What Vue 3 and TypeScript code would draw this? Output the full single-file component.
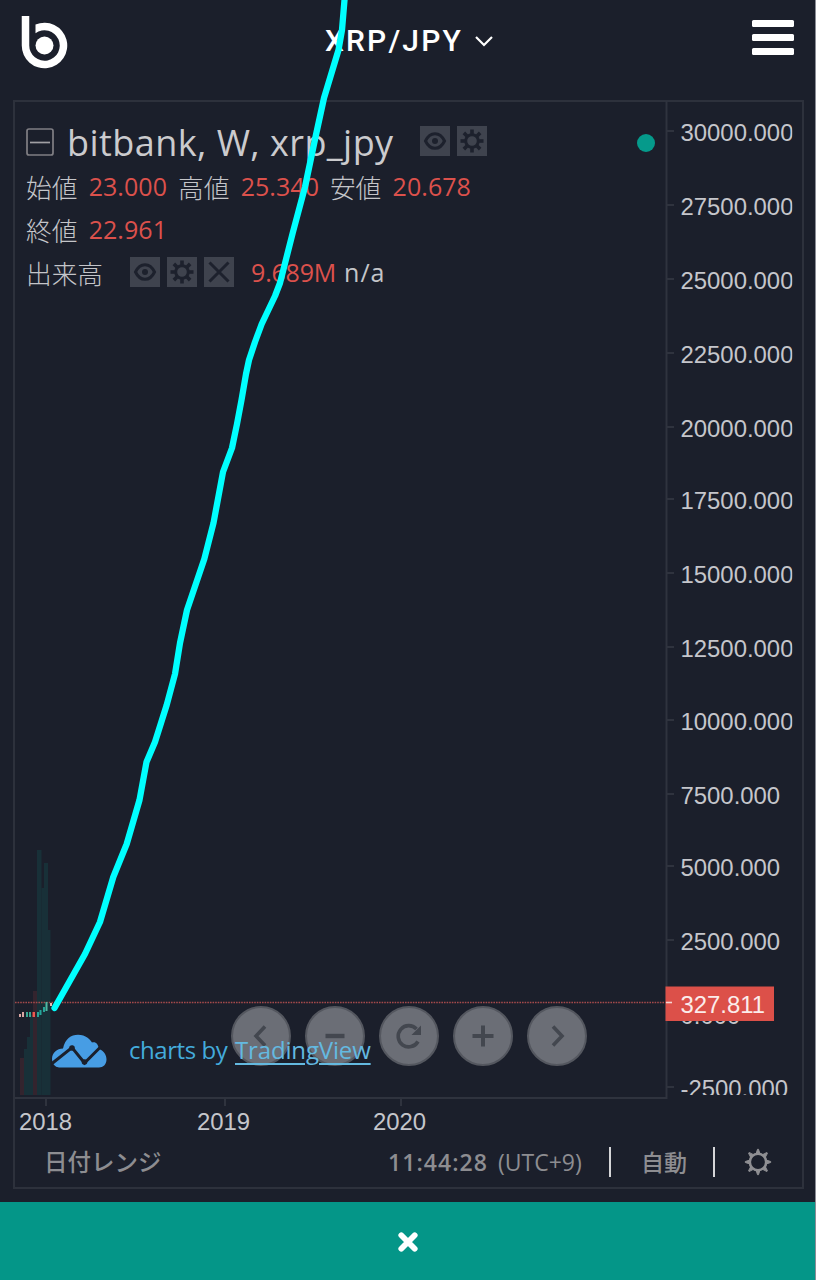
<script setup lang="ts">
interface Tick {
  y: number
  label: string
}

const priceTicks: Tick[] = [
  { y: 131, label: '30000.000' },
  { y: 205, label: '27500.000' },
  { y: 279, label: '25000.000' },
  { y: 353, label: '22500.000' },
  { y: 427, label: '20000.000' },
  { y: 499, label: '17500.000' },
  { y: 573, label: '15000.000' },
  { y: 647, label: '12500.000' },
  { y: 720, label: '10000.000' },
  { y: 794, label: '7500.000' },
  { y: 866, label: '5000.000' },
  { y: 940, label: '2500.000' },
  { y: 1014, label: '0.000' },
  { y: 1087, label: '-2500.000' },
]

const years = [
  { x: 46, left: 19, label: '2018' },
  { x: 225, left: 197, label: '2019' },
  { x: 401, left: 373, label: '2020' },
]

const volumes = [
  { x: 20, w: 4, y: 1058, up: false },
  { x: 24, w: 3, y: 1049, up: true },
  { x: 27, w: 3, y: 1037, up: true },
  { x: 30, w: 3, y: 1015, up: true },
  { x: 33, w: 4, y: 991, up: false },
  { x: 37, w: 4.5, y: 850, up: true },
  { x: 41.5, w: 2.5, y: 888, up: true },
  { x: 44, w: 4, y: 863, up: true },
  { x: 48, w: 2.5, y: 930, up: true },
]

const candles = [
  { x: 19, y: 1014, w: 2, h: 3, c: '#d9a5a2' },
  { x: 22, y: 1012, w: 2, h: 5, c: '#d9a5a2' },
  { x: 26, y: 1012, w: 2, h: 5, c: '#3aa692' },
  { x: 29, y: 1012, w: 2, h: 5, c: '#3aa692' },
  { x: 32.5, y: 1012, w: 2.5, h: 5, c: '#f0574f' },
  { x: 37, y: 1012, w: 2, h: 5, c: '#26a69a' },
  { x: 39.5, y: 1010, w: 2, h: 5, c: '#26a69a' },
  { x: 43, y: 1007, w: 2, h: 5, c: '#26a69a' },
  { x: 45.5, y: 1002, w: 2, h: 9, c: '#4fb8a2' },
  { x: 50, y: 1003, w: 2, h: 3, c: '#e6b9b0' },
]

const trend: [number, number][] = [
  [345, -4], [344.5, 0], [342, 30], [338.5, 50], [324, 98], [315.5, 137], [305, 187],
  [292.7, 233], [280, 283], [275, 296], [261.7, 324], [255, 342], [249, 360], [246, 374], [241.5, 400],
  [237, 424], [232, 448], [223, 472], [213.5, 523], [204.3, 559], [187, 610], [180, 643],
  [175, 674], [166.7, 705], [155, 742], [146.5, 762], [139.5, 800], [126.7, 844],
  [113.3, 877], [100, 922], [85, 954], [54.5, 1008],
]
const trendPoints = trend.map((p) => p.join(',')).join(' ')

const navButtons = ['left', 'minus', 'reset', 'plus', 'right']
const teeth = [0, 45, 90, 135, 180, 225, 270, 315]
</script>

<template>
  <div class="screen">
    <header class="topbar">
      <svg class="logo" width="48" height="54" viewBox="0 0 48 54">
        <path d="M.75 1H8.250V30.500A15.250 15.250 0 1 0 14.500 18.200V9.600A22.750 22.750 0 1 1 .75 30.500Z" fill="#fff" />
        <circle cx="23.500" cy="30.500" r="9" fill="#fff" />
      </svg>
      <div class="pair">
        <span class="pair-name">XRP/JPY</span>
        <svg width="18" height="12" viewBox="0 0 18 12"><path d="M1 2l8 8 8-8" fill="none" stroke="#fff" stroke-width="2.200" /></svg>
      </div>
      <div class="menu"><i></i><i></i><i></i></div>
    </header>

    <main class="frame">
      <svg class="chart" width="788" height="1040" viewBox="15 101 788 1040">
        <defs>
          <clipPath id="axisClip"><rect x="667" y="101" width="125.300" height="994" /></clipPath>
        </defs>
        <g v-for="v in volumes" :key="v.x">
          <rect :x="v.x" :y="v.y" :width="v.w" :height="1095 - v.y" :fill="v.up ? '#183038' : '#33242e'" />
        </g>
        <line x1="15" x2="666" y1="1002.5" y2="1002.5" stroke="#a44a4b" stroke-width="1.6" stroke-dasharray="1.6 1" />
        <rect v-for="c in candles" :key="c.x" :x="c.x" :y="c.y" :width="c.w" :height="c.h" :fill="c.c" />

        <g stroke="#2f333e" stroke-width="2">
          <path d="M666.5 101V1099M15 1098H667.5" fill="none" />
          <line v-for="t in priceTicks" :key="t.y" x1="667" x2="674" :y1="t.y" :y2="t.y" />
          <line v-for="y in years" :key="y.x" :x1="y.x" :x2="y.x" y1="1099" y2="1106" />
        </g>
        <g class="axis" clip-path="url(#axisClip)">
          <text v-for="t in priceTicks" :key="t.y" x="680.5" :y="t.y + 9.5">{{ t.label }}</text>
        </g>
        <g class="axis">
          <text v-for="y in years" :key="y.x" :x="y.left" y="1130">{{ y.label }}</text>
        </g>
        <rect x="665.5" y="986.5" width="108.5" height="34.5" fill="#dc5049" />
        <line x1="666" x2="672" y1="1002.5" y2="1002.5" stroke="#f6d5d2" stroke-width="1.6" />
        <text class="last" x="680.5" y="1012.5">327.811</text>
        <circle cx="646" cy="143" r="9" fill="#059a8b" />
      </svg>

      <section class="legend">
        <div class="row title-row">
          <svg class="collapse" width="28" height="28" viewBox="0 0 28 28">
            <rect x="1" y="1" width="26" height="26" rx="2" fill="none" stroke="#807f84" stroke-width="1.7" />
            <path d="M4 14.500H24" stroke="#a09fa3" stroke-width="1.7" />
          </svg>
          <h1>bitbank, W, xrp_jpy</h1>
          <div class="tools">
            <span class="tool">
              <svg width="30" height="30" viewBox="0 0 30 30"><path d="M5.500 15C10 5.300 20 5.300 24.500 15C20 24.700 10 24.700 5.500 15Z" fill="none" stroke="#1d212d" stroke-width="3" /><circle cx="15" cy="15" r="3" fill="#1d212d" /></svg>
            </span>
            <span class="tool">
              <svg width="30" height="30" viewBox="0 0 30 30"><circle cx="15" cy="15" r="6.300" fill="none" stroke="#1d212d" stroke-width="3" /><path v-for="a in teeth" :key="a" d="M15 3.500V8.500" stroke="#1d212d" stroke-width="3.600" :transform="`rotate(${a} 15 15)`" /></svg>
            </span>
          </div>
        </div>
        <div class="row values">
          <span class="jp">始値</span><b>23.000</b>
          <span class="jp">高値</span><b>25.340</b>
          <span class="jp">安値</span><b>20.678</b>
        </div>
        <div class="row values"><span class="jp">終値</span><b>22.961</b></div>
        <div class="row values volume">
          <span class="jp">出来高</span>
          <div class="tools">
            <span class="tool">
              <svg width="30" height="30" viewBox="0 0 30 30"><path d="M5.500 15C10 5.300 20 5.300 24.500 15C20 24.700 10 24.700 5.500 15Z" fill="none" stroke="#1d212d" stroke-width="3" /><circle cx="15" cy="15" r="3" fill="#1d212d" /></svg>
            </span>
            <span class="tool">
              <svg width="30" height="30" viewBox="0 0 30 30"><circle cx="15" cy="15" r="6.300" fill="none" stroke="#1d212d" stroke-width="3" /><path v-for="a in teeth" :key="a" d="M15 3.500V8.500" stroke="#1d212d" stroke-width="3.600" :transform="`rotate(${a} 15 15)`" /></svg>
            </span>
            <span class="tool">
              <svg width="30" height="30" viewBox="0 0 30 30"><path d="M5.500 5.500l19 19M24.500 5.500l-19 19" stroke="#1d212d" stroke-width="3" /></svg>
            </span>
          </div>
          <b class="vol">9.689M</b><span class="na">n/a</span>
        </div>
      </section>

      <nav class="controls">
        <button v-for="n in navButtons" :key="n" type="button">
          <svg width="60" height="60" viewBox="0 0 60 60" fill="none" stroke="#43474f" stroke-width="3.600">
            <path v-if="n === 'left'" d="M34 20.500L25 30l9 9.500" />
            <path v-else-if="n === 'minus'" d="M20.500 30h19" stroke-width="4.400" />
            <g v-else-if="n === 'reset'">
              <path d="M39 35.500A10.600 10.600 0 1 1 37.500 23" />
              <path d="M42 19.500V29H32.500Z" fill="#43474f" stroke="none" />
            </g>
            <path v-else-if="n === 'plus'" d="M19.500 30h21M30 19.500v21" stroke-width="4" />
            <path v-else d="M26 20.500l9 9.500-9 9.500" />
          </svg>
        </button>
      </nav>

      <div class="credit">
        <svg width="56" height="34" viewBox="0 0 56 34">
          <path d="M8 33.500A8 8 0 0 1 1 25C1 19 6 14.500 12 14.500C14 5 20 .8 27 .8C35 .8 39 5.500 41 8.500C45 7.500 47 10 48 15C53 17 55.500 21 55.500 25.500C55.500 30.500 52 33.500 48 33.500Z" fill="#479de4" />
          <path d="M1 29.500L21 13.500L33.500 29L50 12.500" fill="none" stroke="#1b202c" stroke-width="3" />
          <circle cx="21" cy="14" r="2.800" fill="#1b202c" /><circle cx="33.500" cy="28" r="2.800" fill="#1b202c" />
        </svg>
        <span class="credit-text"><span class="by">charts by</span><a>TradingView</a></span>
      </div>

      <div class="statusbar">
        <span class="range">日付レンジ</span>
        <span class="clock"><strong>11:44:28</strong><span class="utc">(UTC+9)</span></span>
        <i class="sep"></i>
        <span class="auto">自動</span>
        <i class="sep"></i>
        <svg class="gear" width="28" height="28" viewBox="0 0 28 28"><circle cx="14" cy="14" r="8.200" fill="none" stroke="#8f8f93" stroke-width="2.600" /><path v-for="a in teeth" :key="a" d="M12 6L13.500 1.300H14.500L16 6Z" fill="#8f8f93" stroke="#8f8f93" stroke-width="1" :transform="`rotate(${a} 14 14)`" /></svg>
      </div>
    </main>

    <footer class="close">
      <svg width="22" height="22" viewBox="0 0 22 22"><path d="M4.300 4.300l13.400 13.400M17.700 4.300L4.300 17.700" stroke="#fff" stroke-width="5.800" stroke-linecap="round" /></svg>
    </footer>

    <svg class="trend" width="816" height="1280" viewBox="0 0 816 1280">
      <polyline :points="trendPoints" fill="none" stroke="#00ffff" stroke-width="6.300" stroke-linejoin="round" stroke-linecap="round" />
    </svg>
  </div>
</template>

<style>
body {
  background: #1b202c;
}
</style>

<style scoped>
.screen {
  position: relative;
  box-sizing: border-box;
  width: 816px;
  height: 1280px;
  overflow: hidden;
  display: flex;
  flex-direction: column;
  background: #1b1f2b;
  border-right: 1px solid #8b8d96;
  font-family: "Open Sans", "Noto Sans CJK JP", sans-serif;
  color: #c4c5c9;
}
.topbar {
  height: 100px;
  box-sizing: border-box;
  padding: 15px 21px 0 21px;
  display: flex;
  justify-content: space-between;
  align-items: flex-start;
}
.logo {
  display: block;
}
.pair {
  display: flex;
  align-items: center;
  gap: 12px;
  height: 51px;
  margin-left: -3px;
}
.pair-name {
  font: 500 30px/51px Roboto, sans-serif;
  letter-spacing: 2.200px;
  color: #fff;
}
.menu {
  display: flex;
  flex-direction: column;
  gap: 6.500px;
  padding-top: 5px;
}
.menu i {
  width: 42px;
  height: 7.400px;
  border-radius: 1.500px;
  background: #fff;
}
.frame {
  position: relative;
  box-sizing: border-box;
  flex: none;
  width: 791px;
  height: 1089px;
  margin-left: 13px;
  border: 2px solid #2d313c;
  display: flex;
  flex-direction: column;
}
.chart {
  display: block;
  flex: none;
  margin: -1px 0 0 0;
}
.axis text,
.last {
  font: 23.900px "Liberation Sans", Arial, sans-serif;
  fill: #c5c6cb;
}
.last {
  fill: #fbeceb;
}
.legend {
  position: absolute;
  left: 11px;
  top: 18.500px;
  width: 600px;
}
.row {
  display: flex;
  align-items: center;
  height: 43px;
  white-space: nowrap;
}
.title-row {
  height: 44px;
}
.collapse {
  position: relative;
  top: -0.500px;
}
h1 {
  margin: 0 0 0 13px;
  width: 329px;
  font: 400 36px/44px "Open Sans", sans-serif;
  letter-spacing: 0.450px;
  color: #cbcbce;
}
.tools {
  display: flex;
  gap: 7px;
}
.title-row .tools {
  margin: -3px 0 0 24px;
}
.tool {
  width: 30px;
  height: 30px;
  background: #3f434e;
}
.tool svg {
  display: block;
}
.values {
  font-size: 25px;
}
.values b {
  width: 78px;
  margin: 0 11.300px;
  font-weight: 400;
  letter-spacing: 0.050px;
  color: #dc514c;
}
.jp {
  font-family: "Noto Sans CJK JP", sans-serif;
  font-weight: 300;
  font-size: 25.700px;
}
.volume .tools {
  margin-left: 27px;
}
.volume .vol {
  width: 83px;
  margin: 0 10px 0 17px;
  letter-spacing: -0.200px;
}
.na {
  letter-spacing: 1px;
}
.controls {
  position: absolute;
  left: 216px;
  top: 904px;
  display: flex;
  gap: 13.700px;
}
.controls button {
  box-sizing: border-box;
  width: 60.300px;
  height: 60.300px;
  padding: 0;
  border: 2px solid #54575f;
  border-radius: 50%;
  background: #6b6e76;
  display: flex;
  align-items: center;
  justify-content: center;
}
.controls svg {
  flex: none;
}
.credit {
  position: absolute;
  left: 36px;
  top: 930px;
  display: flex;
  align-items: center;
  height: 38px;
  font-size: 24px;
  white-space: nowrap;
  color: #43abdb;
}
.credit-text {
  display: flex;
  margin: -4px 0 0 22px;
}
.by {
  width: 98px;
  margin-right: 8px;
  letter-spacing: -0.450px;
}
.credit a {
  color: #64b9e0;
  letter-spacing: -0.150px;
  text-decoration: underline;
  text-decoration-thickness: 2px;
  text-underline-offset: 4px;
}
.statusbar {
  display: flex;
  align-items: center;
  height: 41px;
  padding-left: 29px;
  color: #8d8d91;
  white-space: nowrap;
}
.range {
  width: 344px;
  font: 500 23.500px/41px "Noto Sans CJK JP", sans-serif;
}
.clock {
  display: flex;
  width: 221px;
  font-size: 23px;
}
.clock strong {
  width: 99px;
  margin-right: 11px;
  font-weight: 600;
  letter-spacing: 1.050px;
}
.sep {
  width: 2px;
  height: 30px;
  background: #d5d5d8;
}
.auto {
  width: 72px;
  margin-left: 30px;
  font: 500 23px/41px "Noto Sans CJK JP", sans-serif;
}
.gear {
  margin-left: 29px;
}
.close {
  box-sizing: border-box;
  margin-top: auto;
  margin-right: -1px;
  height: 78.500px;
  padding-top: 2px;
  display: flex;
  align-items: center;
  justify-content: center;
  background: #049688;
}
.trend {
  position: absolute;
  left: 0;
  top: 0;
  pointer-events: none;
}
</style>
